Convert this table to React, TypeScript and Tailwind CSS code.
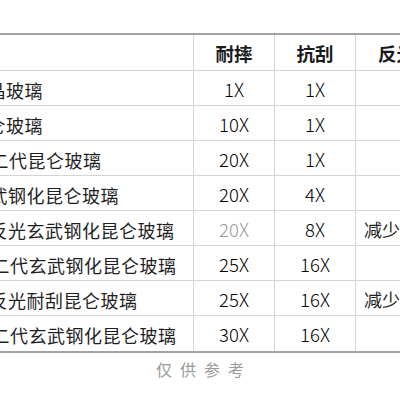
import React from "react";

type Row = {
  name: string;
  ml: string;
  a: string;
  b: string;
  c: string;
  gray?: boolean;
};

const rows: Row[] = [
  { name: "微晶玻璃", ml: "ml-[-31px]", a: "1X", b: "1X", c: "" },
  { name: "昆仑玻璃", ml: "ml-[-31px]", a: "10X", b: "1X", c: "" },
  { name: "第二代昆仑玻璃", ml: "ml-[-28px]", a: "20X", b: "1X", c: "" },
  { name: "玄武钢化昆仑玻璃", ml: "ml-[-29px]", a: "20X", b: "4X", c: "" },
  { name: "低反光玄武钢化昆仑玻璃", ml: "ml-[-29px]", a: "20X", b: "8X", c: "减少反光", gray: true },
  { name: "第二代玄武钢化昆仑玻璃", ml: "ml-[-27px]", a: "25X", b: "16X", c: "" },
  { name: "低反光耐刮昆仑玻璃", ml: "ml-[-29px]", a: "25X", b: "16X", c: "减少反光" },
  { name: "第二代玄武钢化昆仑玻璃", ml: "ml-[-27px]", a: "30X", b: "16X", c: "" },
];

const cjk = "[font-family:'Noto_Sans_CJK_SC','Noto_Sans',sans-serif]";

export default function App() {
  return (
    <div className={`w-[400px] h-[400px] overflow-hidden bg-white pt-[33px] ${cjk}`}>
      <div className="w-[480px] border-t-2 border-b-2 border-[#a3a3a3]">
        <div className="flex h-[36px] border-b border-[#d4d4d4] text-[18.5px] font-bold text-[#1a1a1a]">
          <div className="w-[194px] shrink-0 border-r border-[#d4d4d4]" />
          <div className="w-[81px] shrink-0 border-r border-[#d4d4d4] flex items-center justify-center pt-[3px]">耐摔</div>
          <div className="w-[81px] shrink-0 border-r border-[#d4d4d4] flex items-center justify-center pt-[3px]">抗刮</div>
          <div className="w-[81px] shrink-0 flex items-center justify-center pt-[3px]">反光</div>
        </div>
        {rows.map((r, i) => (
          <div
            key={i}
            className={`flex h-[35px] ${i < rows.length - 1 ? "border-b border-[#d4d4d4]" : ""} text-[18px] text-[#1f1f1f]`}
          >
            <div className="w-[194px] shrink-0 border-r border-[#d4d4d4] flex items-center overflow-hidden pt-[3px]">
              <span className={`${r.ml} whitespace-nowrap leading-none tracking-[0.5px]`}>{r.name}</span>
            </div>
            <div
              className={`w-[81px] shrink-0 border-r border-[#d4d4d4] flex items-center justify-center pt-[3px] font-light text-[18.5px] ${
                r.gray ? "text-[#9a9a9a]" : "text-black"
              }`}
            >
              {r.a}
            </div>
            <div className="w-[81px] shrink-0 border-r border-[#d4d4d4] flex items-center justify-center pt-[3px] font-light text-[18.5px] text-black">
              {r.b}
            </div>
            <div className="w-[81px] shrink-0 flex items-center pl-[8px] pt-[3px] whitespace-nowrap">{r.c}</div>
          </div>
        ))}
      </div>
      <div className="w-[400px] flex justify-center pt-[4px] text-[16px] tracking-[8px] text-[#9a9a9a] pl-[8px]">
        仅供参考
      </div>
    </div>
  );
}
